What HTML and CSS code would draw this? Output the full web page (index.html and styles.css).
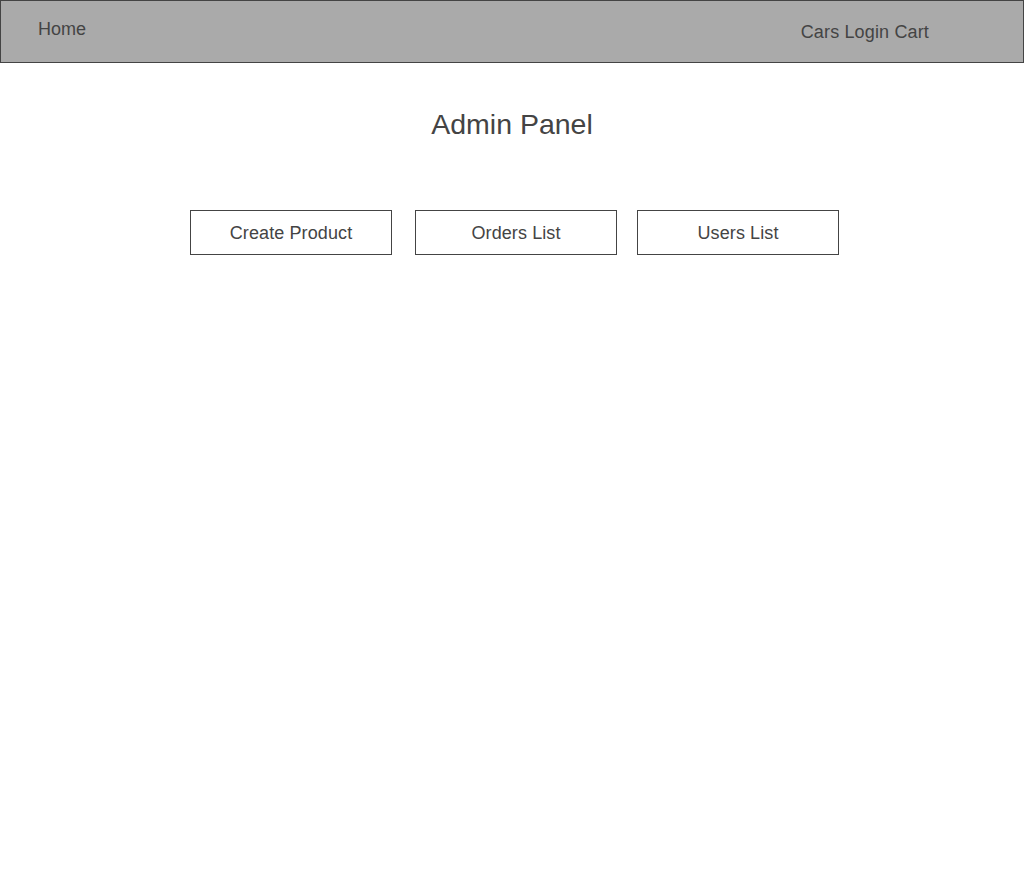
FILE: index.html
```html
<!DOCTYPE html>
<html>
<head>
<meta charset="utf-8">
<link rel="stylesheet" href="styles.css">
</head>
<body>
<header class="topbar">
  <a class="home">Home</a>
  <nav class="links">Cars Login Cart</nav>
</header>
<main class="content">
  <h1 class="title">Admin Panel</h1>
  <div class="actions">
    <button class="btn btn-first">Create Product</button>
    <button class="btn">Orders List</button>
    <button class="btn">Users List</button>
  </div>
</main>
</body>
</html>
```
FILE: styles.css
```css
* { box-sizing: border-box; }
html, body { margin: 0; padding: 0; background: #fff; }
body {
  font-family: "Liberation Sans", Arial, sans-serif;
  color: #444;
}
.topbar {
  height: 63px;
  background: #aaa;
  border: 1px solid #444;
  display: flex;
  justify-content: space-between;
  align-items: flex-start;
  padding: 0 94px 0 37px;
}
.home {
  font-size: 18px;
  line-height: 21px;
  margin-top: 18px;
}
.links {
  font-size: 18px;
  line-height: 21px;
  margin-top: 21px;
  letter-spacing: 0.15px;
}
.content { display: flex; flex-direction: column; align-items: center; }
.title {
  font-weight: normal;
  font-size: 28.5px;
  line-height: 33px;
  margin: 45px 0 0;
}
.actions {
  display: flex;
  gap: 20px;
  margin-top: 69px;
  padding-left: 5px;
}
.btn {
  width: 202px;
  height: 45px;
  background: #fff;
  border: 1px solid #444;
  border-radius: 0;
  font-family: "Liberation Sans", Arial, sans-serif;
  font-size: 18px;
  color: #444;
  padding: 2px 0 0;
  letter-spacing: 0.1px;
}
.btn-first { margin-right: 3px; }
```
